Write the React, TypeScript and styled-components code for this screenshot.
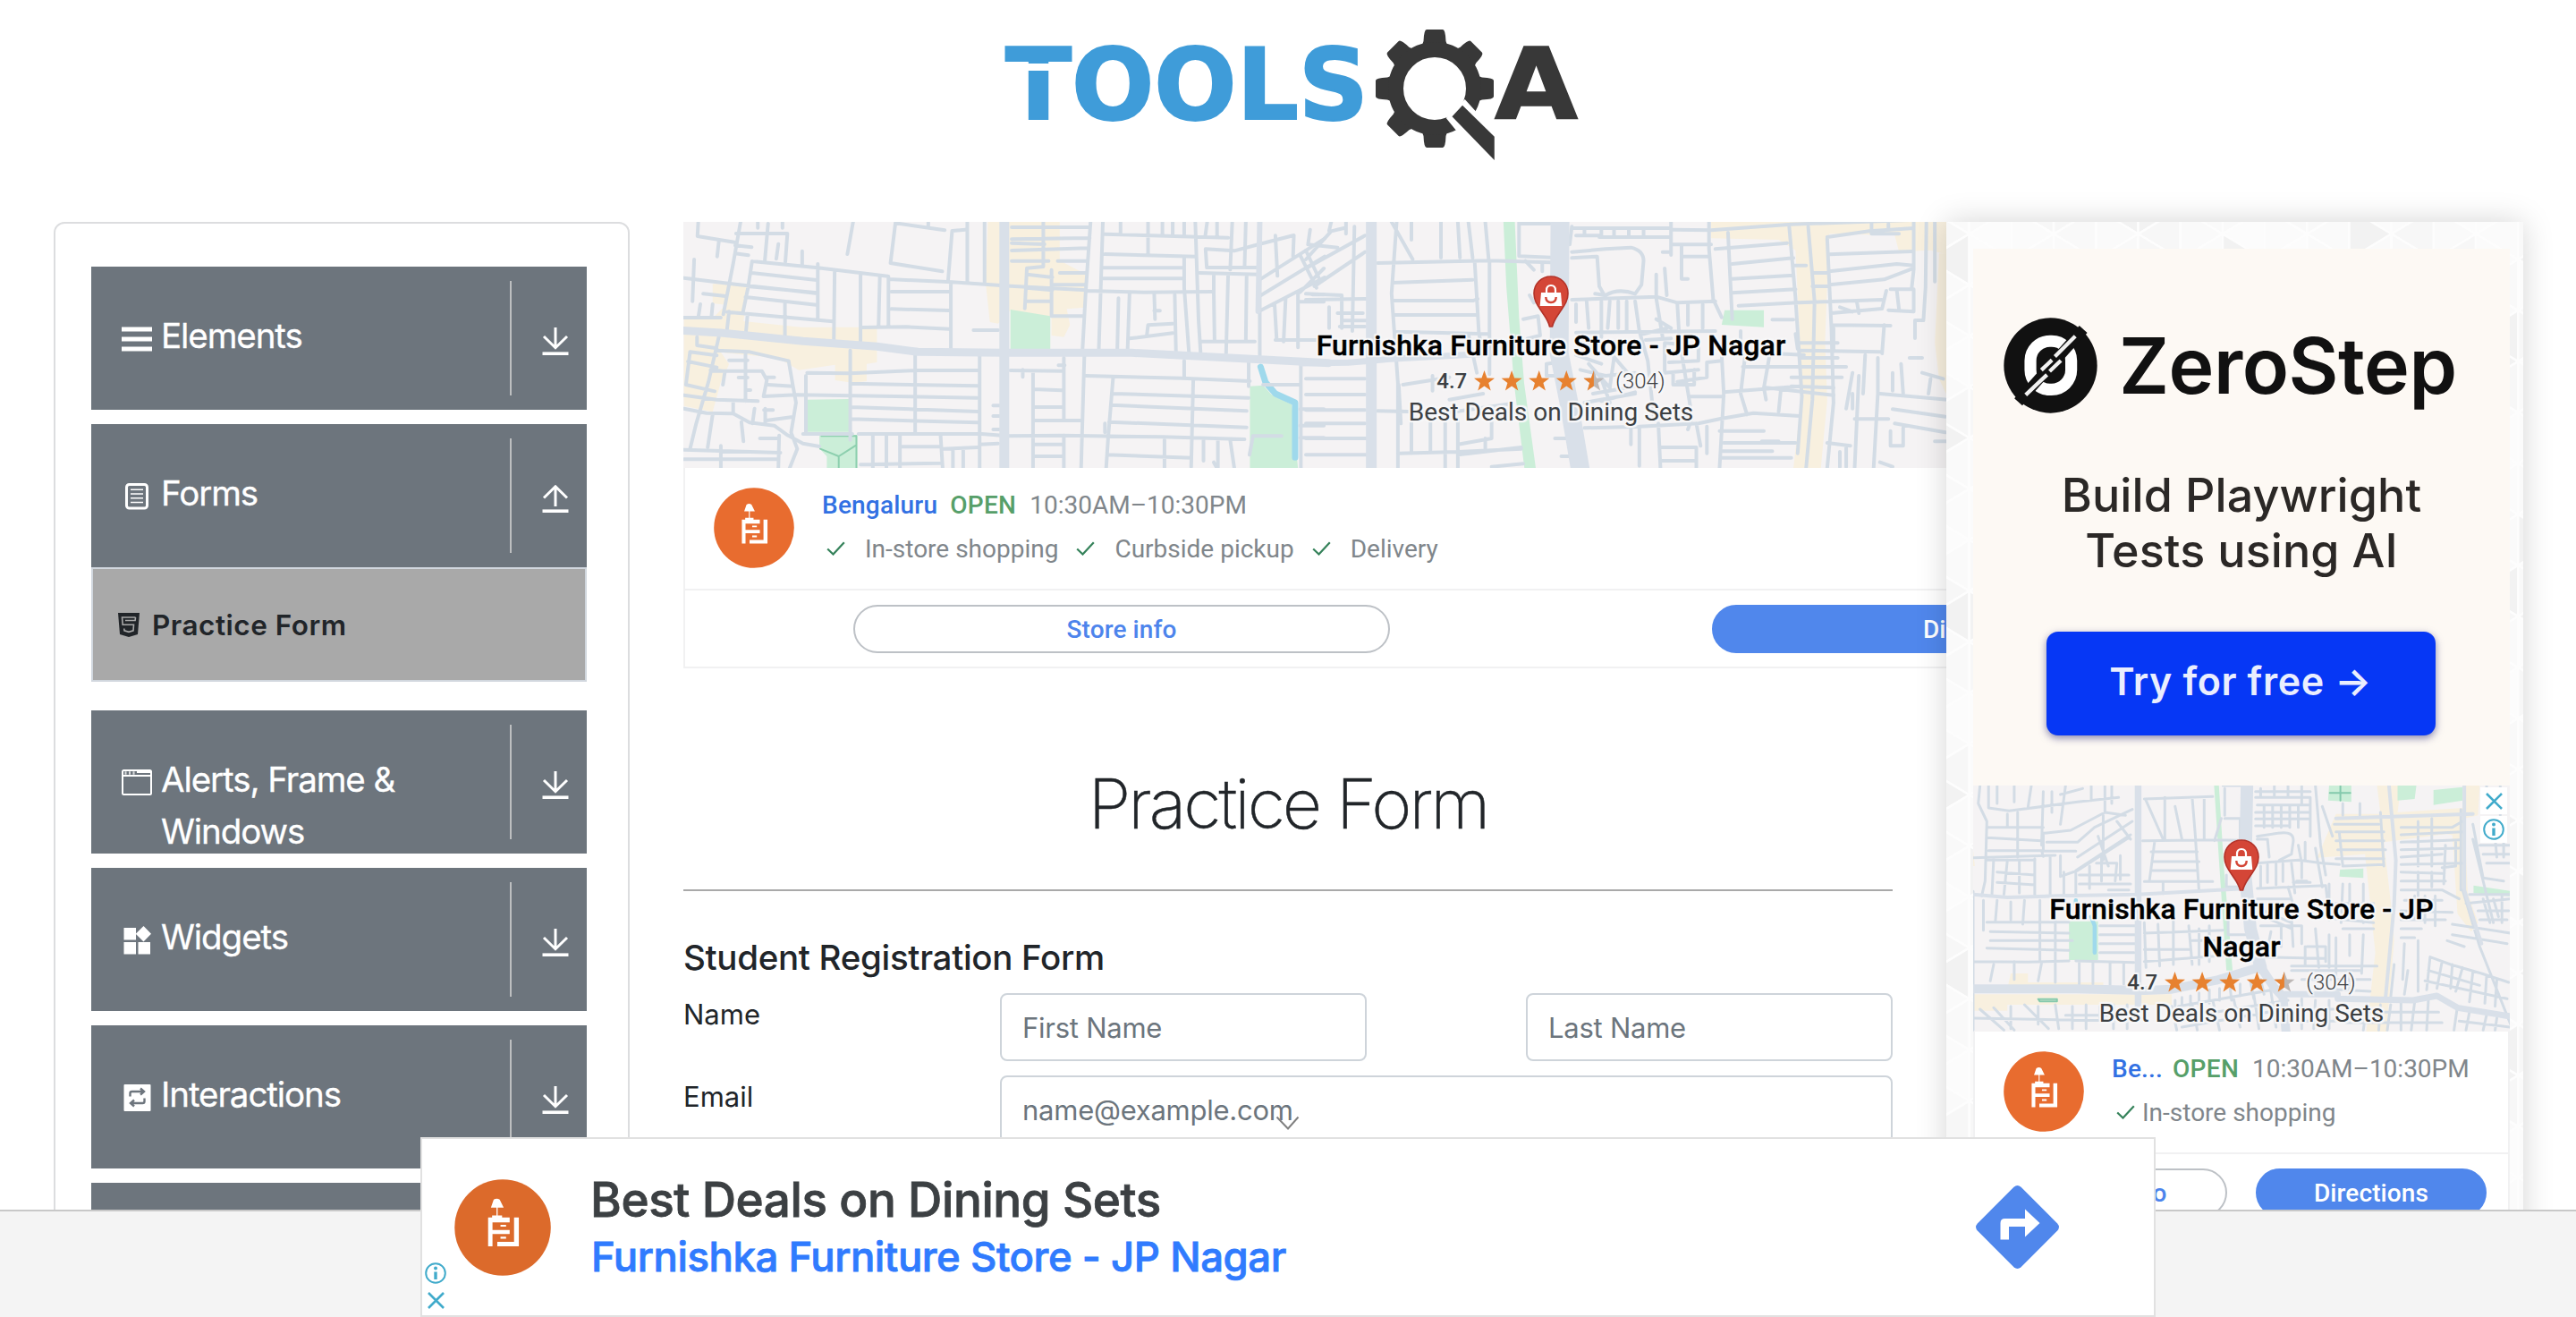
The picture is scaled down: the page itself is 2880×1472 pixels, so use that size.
import React from 'react';
import styled, { createGlobalStyle, css } from 'styled-components';

const GlobalStyle = createGlobalStyle`
  * { box-sizing: border-box; }
  html, body { margin: 0; padding: 0; background: #fff; }
  body { font-family: Inter, 'Liberation Sans', sans-serif; color: #212529; overflow: hidden; }
`;

/* ---------- page frame ---------- */

const Page = styled.div`
  position: relative;
  display: flex;
  flex-direction: column;
  width: 2880px;
  height: 1472px;
  overflow: hidden;
  background: #fff;
`;

const Header = styled.header`
  flex: none;
  display: flex;
  justify-content: center;
  height: 248px;
  padding: 30px 0 0 8px;
`;

const Columns = styled.div`
  flex: none;
  display: flex;
  align-items: flex-start;
  gap: 60px;
  height: 1104px;
  padding-left: 60px;
  clip-path: inset(-60px 0 0 0);
`;

const Footer = styled.footer`
  flex: 1;
  border-top: 2px solid #c8c8c8;
  background: #f4f4f4;
`;

/* ---------- left menu ---------- */

const Sidebar = styled.nav`
  flex: none;
  display: flex;
  flex-direction: column;
  width: 644px;
  height: 1400px;
  padding: 48px 46px 0 40px;
  border: 2px solid #dcdddf;
  border-radius: 12px;
`;

const Group = styled.div<{ $open?: boolean }>`
  display: flex;
  flex-direction: column;
  width: 554px;
  margin-bottom: ${p => (p.$open ? 32 : 16)}px;
`;

const GroupHead = styled.div`
  display: flex;
  align-items: flex-start;
  height: 160px;
  padding-left: 34px;
  overflow: hidden;
  background: #6d757d;
  color: #fff;
`;

const GroupIcon = styled.svg`
  flex: none;
  width: 34px;
  height: 34px;
  margin-top: 64px;
`;

const GroupLabel = styled.span`
  flex: 1;
  padding: 48px 29px 0 10px;
  font-size: 38.5px;
  line-height: 58px;
  letter-spacing: -1.08px;
  -webkit-text-stroke: 0.3px #fff;
`;

const GroupToggle = styled.span`
  display: flex;
  align-items: center;
  justify-content: flex-end;
  width: 86px;
  height: 128px;
  margin-top: 16px;
  padding: 7px 20px 0 0;
  border-left: 2px solid #bdbfc0;
`;

const SubItem = styled.div`
  display: flex;
  align-items: center;
  gap: 14px;
  height: 128px;
  padding: 0 0 0 28px;
  border: 2px solid #d1d7de;
  background: #a9a9a9;
  font-size: 31.5px;
  font-weight: 600;
  letter-spacing: 0.5px;
`;

/* ---------- centre column ---------- */

const Main = styled.main`
  flex: none;
  display: flex;
  flex-direction: column;
  width: 1352px;
`;

const Title = styled.h1`
  margin: 102px 0 0;
  padding-bottom: 48px;
  border-bottom: 2px solid #a9a9a9;
  font-size: 77px;
  font-weight: 200;
  line-height: 96px;
  letter-spacing: -2.9px;
  text-align: center;
  -webkit-text-stroke: 0.5px #212529;
`;

const FormHeading = styled.h5`
  margin: 50px 0 16px;
  font-size: 38.5px;
  font-weight: 500;
  line-height: 48px;
  letter-spacing: -0.31px;
`;

const FormRow = styled.div<{ $wide?: boolean }>`
  display: grid;
  grid-template-columns: ${p => (p.$wide ? '354px 998px' : '354px 410px 178px 410px')};
  height: 76px;
  margin-bottom: 16px;
`;

const Label = styled.label`
  font-size: 31px;
  line-height: 48px;
`;

const Input = styled.input<{ $col?: number }>`
  grid-column: ${p => p.$col ?? 2};
  width: 100%;
  height: 76px;
  padding: 0 23px;
  border: 2px solid #ced4da;
  border-radius: 8px;
  outline: none;
  background: #fff;
  font: 400 31px Inter, sans-serif;
  letter-spacing: -0.25px;
  &::placeholder { color: #6c757d; opacity: 1; }
`;

/* ---------- store ad ---------- */

const StoreAd = styled.section<{ $width: number }>`
  position: relative;
  display: flex;
  flex-direction: column;
  width: ${p => p.$width}px;
  height: 500px;
  font-family: Roboto, 'Liberation Sans', sans-serif;
  background: #fff;
`;

const MapArea = styled.div`
  position: relative;
  display: flex;
  flex-direction: column;
  align-items: center;
  height: 275px;
  padding-top: 60px;
  overflow: hidden;
  background: #f5f3f4;
  > * { position: relative; }
`;

const MapSvg = styled.svg`
  && { position: absolute; }
  inset: 0;
  width: 100%;
  height: 275px;
  fill: none;
  stroke-linecap: round;
  stroke-linejoin: round;
  path { vector-effect: non-scaling-stroke; }
`;

const halo = css`
  text-shadow: 2px 0 1px #f7f7f8, -2px 0 1px #f7f7f8, 0 2px 1px #f7f7f8, 0 -2px 1px #f7f7f8,
    2px 2px 1px #f7f7f8, -2px -2px 1px #f7f7f8, 2px -2px 1px #f7f7f8, -2px 2px 1px #f7f7f8;
`;

const StoreName = styled.div<{ $width?: number }>`
  ${halo}
  width: ${p => (p.$width ? `${p.$width}px` : 'auto')};
  margin-top: -1px;
  color: #000;
  font-size: 32px;
  font-weight: 500;
  line-height: 42px;
  letter-spacing: 0.1px;
  text-align: center;
  -webkit-text-stroke: 0.4px #000;
`;

const Rating = styled.div`
  ${halo}
  display: flex;
  align-items: center;
  height: 37px;
  color: #3c4043;
  font-size: 24px;
  font-weight: 500;
`;

const Stars = styled.svg`
  width: 147px;
  height: 24px;
  margin: 0 11px 0 8px;
`;

const Reviews = styled.span`
  font-weight: 300;
`;

const Deal = styled.div`
  ${halo}
  color: #3c4043;
  font-size: 28px;
  line-height: 34px;
`;

const Info = styled.div`
  display: flex;
  height: 136px;
  padding: 22px 0 0 32px;
  border: solid #f1f1f2;
  border-width: 0 2px;
`;

const StoreLogo = styled.svg<{ $size: number }>`
  flex: none;
  width: ${p => p.$size}px;
  height: ${p => p.$size}px;
`;

const Facts = styled.div`
  display: flex;
  flex-direction: column;
  margin: -5.5px 0 0 31px;
  color: #80868b;
  font-size: 28px;
  line-height: 49px;
  white-space: nowrap;
`;

const FactRow = styled.div<{ $gap: number }>`
  display: flex;
  gap: ${p => p.$gap}px;
  height: 49px;
`;

const City = styled.span<{ $short?: boolean }>`
  margin-right: ${p => (p.$short ? -4 : -1)}px;
  color: #3271e3;
  font-weight: 500;
  letter-spacing: 0.2px;
`;

const Open = styled.span`
  color: #579f69;
  font-weight: 500;
  letter-spacing: 0.3px;
`;

const Service = styled.span<{ $gap: number }>`
  display: flex;
  align-items: center;
  gap: ${p => p.$gap}px;
  padding-left: 5px;
`;

const Actions = styled.div<{ $pad: number; $gap: number }>`
  display: grid;
  grid-template-columns: 1fr 1fr;
  gap: ${p => p.$gap}px;
  height: 89px;
  margin-top: -1px;
  padding: 16px ${p => p.$pad - 2}px 0;
  border: 2px solid #f1f1f2;
`;

const PillButton = styled.button<{ $solid?: boolean }>`
  height: 54px;
  padding: 0;
  border: 2px solid ${p => (p.$solid ? '#5087ec' : '#bdc1c6')};
  border-radius: 27px;
  background: ${p => (p.$solid ? '#5087ec' : '#fff')};
  color: ${p => (p.$solid ? '#fff' : '#4d84ec')};
  font: 500 28px Roboto, sans-serif;
  letter-spacing: 0.1px;
`;

const AdBadge = styled.div`
  position: absolute;
  top: 2px;
  right: 3px;
  display: flex;
  flex-direction: column;
  gap: 2px;
`;

const AdBadgeCell = styled.span`
  display: flex;
  align-items: center;
  justify-content: center;
  width: 30px;
  height: 30px;
  background: #fff;
`;

/* ---------- right column ---------- */

const Aside = styled.aside`
  position: relative;
  z-index: 1;
  flex: none;
  width: 645px;
  height: 1400px;
  padding: 30px 15px 0 30px;
  background: #fafafa;
  box-shadow: 0 0 32px rgba(0, 0, 0, 0.17);
`;

const Pattern = styled.svg`
  position: absolute;
  inset: 0;
  width: 645px;
  height: 1400px;
`;

const Promo = styled.section`
  position: relative;
  display: flex;
  flex-direction: column;
  align-items: center;
  width: 600px;
  height: 600px;
  padding-top: 77px;
  background: #fdf9f4;
`;

const PromoBrand = styled.div`
  display: flex;
  align-items: center;
  align-self: flex-start;
  gap: 24px;
  height: 107px;
  padding-left: 34px;
  color: #111;
  font-size: 86px;
  font-weight: 600;
  letter-spacing: -0.5px;
`;

const PromoText = styled.div`
  width: 440px;
  margin-top: 61px;
  color: #2b2826;
  font-size: 52px;
  font-weight: 500;
  line-height: 62px;
  letter-spacing: 0.1px;
  text-align: center;
  white-space: nowrap;
`;

const PromoButton = styled.button`
  width: 435px;
  height: 116px;
  margin: 59px 2px 0 0;
  padding: 0 0 7px;
  border: 0;
  border-radius: 13px;
  background: #0637f5;
  box-shadow: 0 3px 8px rgba(40, 40, 120, 0.55);
  color: #eaeefe;
  font: 600 43px Inter, sans-serif;
  letter-spacing: 0.6px;
`;

/* ---------- bottom anchor ad ---------- */

const AnchorAd = styled.section`
  position: absolute;
  z-index: 2;
  left: 470px;
  top: 1271px;
  display: flex;
  align-items: center;
  width: 1940px;
  height: 201px;
  padding: 0 106px 0 36px;
  border: 2px solid #e1e1e1;
  background: #fff;
`;

const AnchorCopy = styled.div`
  flex: 1;
  display: flex;
  flex-direction: column;
  margin: 0 0 0 44px;
`;

const AnchorTitle = styled.div`
  color: #3c4043;
  font-size: 53px;
  font-weight: 500;
  line-height: 64px;
  letter-spacing: -0.4px;
  -webkit-text-stroke: 0.8px #3c4043;
`;

const AnchorStore = styled.div`
  margin: 2px 0 0 1px;
  color: #307bfe;
  font-size: 45.5px;
  font-weight: 500;
  line-height: 60px;
  letter-spacing: -0.45px;
  -webkit-text-stroke: 0.8px #307bfe;
`;

const AnchorBadge = styled.div`
  position: absolute;
  left: 3px;
  bottom: 7px;
  display: flex;
  flex-direction: column;
  align-items: center;
  gap: 9px;
`;

const Caret = styled.svg`
  position: absolute;
  left: 1426px;
  top: 1247px;
  width: 27px;
  height: 16px;
`;

/* ---------- drawings ---------- */

const gearTooth = 'M-15 -46 L-12.5 -53 Q-12 -66 -9 -66 L9 -66 Q12 -66 12.5 -53 L15 -46 Z';

const Logo = () => (
  <svg width="642" height="154" viewBox="0 0 642 154">
    <text x="1" y="103" fontFamily="DejaVu Sans" fontWeight="700" fontSize="110" fill="#3f9cd9" stroke="#3f9cd9" strokeWidth="2" textLength="406" lengthAdjust="spacingAndGlyphs">TOOLS</text>
    <rect x="14" y="41" width="54" height="8" fill="#fff" />
    <g transform="translate(481 69)" fill="#383838">
      {[0, 45, 90, 135, 180, 225, 270, 315].map(a => (
        <path key={a} d={gearTooth} transform={`rotate(${a})`} />
      ))}
      <circle r="43.5" fill="none" stroke="#383838" strokeWidth="17" />
    </g>
    <g transform="scale(.44643 .33333) translate(-52 -60)">
      <path d="M1205 303 L1238 352 L1275 352 L1300 440 L1279 512 L1210 450 L1184 409 L1158 366 Z" fill="#fff" />
      <path d="M1199 323 L1279 428 V507 L1173 361 Z" fill="#383838" />
    </g>
    <text x="548" y="103" fontFamily="DejaVu Sans" fontWeight="700" fontSize="110" fill="#383838" stroke="#383838" strokeWidth="1.500" textLength="93" lengthAdjust="spacingAndGlyphs">A</text>
  </svg>
);

const Arrow = ({ up }: { up?: boolean }) => (
  <svg width="30" height="32" viewBox="0 0 30 32" fill="none" stroke="#fff" strokeWidth="3">
    {up ? <path d="M15 24 V2 M2 14.500 L15 1.800 L28 14.500" /> : <path d="M15 0 V23 M2 10 L15 22.700 L28 10" />}
    <path d="M0.500 29.200 H29.500" strokeWidth="3.600" />
  </svg>
);

const icons: Record<string, React.ReactNode> = {
  elements: <path d="M0 3.500h34v5H0zM0 14.500h34v5H0zM0 25.500h34v5H0z" fill="#fff" />,
  forms: (
    <g fill="none" stroke="#fff">
      <rect x="5.500" y="3.500" width="23" height="26.500" rx="3" strokeWidth="3" />
      <path d="M10 9.300h14M10 14h14M10 18.700h14M10 23.500h14" strokeWidth="1.500" />
    </g>
  ),
  alerts: (
    <g fill="none" stroke="#fff" strokeWidth="2">
      <rect x="1" y="3" width="32" height="27" rx="1.500" />
      <path d="M1 9h32" />
      <path d="M3.500 6h2M8 6h2M12.500 6h2" strokeWidth="3.500" opacity=".75" />
      <path d="M17 4.500h15" strokeWidth="3" />
    </g>
  ),
  widgets: <path d="M2.500 3h13.500v13.500H2.500zM2.500 19h13.500V32.500H2.500zM18.500 19H32V32.500H18.500zM24.500 1l8.500 8.800-8.500 8.800-8.800-8.800z" fill="#fff" />,
  interactions: (
    <g>
      <rect x="2.500" y="2" width="30" height="30" rx="1" fill="#fff" />
      <path d="M9.500 15.500v-3.500q0-2 2-2h12M21 6.500l4 3.500-4 3.500M25.500 17.500v3.500q0 2-2 2h-12M14 19.500l-4 3.500 4 3.500" fill="none" stroke="#6d757d" strokeWidth="2.400" />
    </g>
  ),
};

const Html5 = () => (
  <svg width="24" height="27" viewBox="0 0 24 27">
    <path d="M0 0H24L22 24 12 27 2 24Z" fill="#212529" />
    <path d="M19.500 5H4.500L5.200 13.200H17.500L17 19.800 12 21.300 7 19.800 6.800 17.500M19.500 5L19.100 8.500H8" fill="none" stroke="#a9a9a9" strokeWidth="1.600" />
  </svg>
);

const FurnitureLogo = ({ size, tone }: { size: number; tone: string }) => (
  <StoreLogo $size={size} viewBox="1049 1220 241 242">
    <circle cx="1169.500" cy="1341" r="120.500" fill={tone} />
    <path d="M1140 1291l7-20q8-5 15 0l10 20zM1154 1291h3v20h-3zM1143 1311h25v6h-25zM1133 1316h54v12h-43v19h43v10h-43v31h-11zM1164 1334h14v5h-14zM1164 1364h14v5h-14zM1198 1316h12v72h-54v-11h42z" fill="#fff" />
  </StoreLogo>
);

const Pin = () => (
  <svg width="40" height="58" viewBox="0 0 40 58">
    <path d="M20 1C9 1 1 9.500 1 20c0 9 5 14.500 9.500 21.500 4 6 6.500 9 8 15.500h3c1.500-6.500 4-9.500 8-15.500C34 34.500 39 29 39 20 39 9.500 31 1 20 1Z" fill="#d44637" stroke="#b23228" strokeWidth="1.600" />
    <path d="M15 20v-3.500q0-5.500 5-5.500t5 5.500V20" fill="none" stroke="#fff" strokeWidth="2.200" />
    <path d="M9 19h22l1.300 15H7.700z" fill="#fff" />
    <path d="M14.300 24q0 6 5.700 6t5.700-6" fill="none" stroke="#d44637" strokeWidth="2.400" />
  </svg>
);

const starPath = 'M11.500 0l3 8.500 8.500.2-6.800 5.300 2.500 8.500-7.200-5-7.200 5 2.500-8.500L0 8.700l8.500-.2z';

const StarRow = () => (
  <Stars viewBox="0 0 147 24">
    <clipPath id="half"><rect x="0" y="0" width="11.500" height="24" /></clipPath>
    {[0, 1, 2, 3].map(i => <path key={i} d={starPath} transform={`translate(${i * 30.6} 0)`} fill="#e7812f" />)}
    <g transform="translate(122.400 0)">
      <path d={starPath} fill="#bdb8b6" />
      <path d={starPath} fill="#e7812f" clipPath="url(#half)" />
    </g>
  </Stars>
);

const Check = () => (
  <svg width="21" height="16" viewBox="0 0 21 16">
    <path d="M1.200 8.500L7.500 14.500 19.800 1.200" fill="none" stroke="#35825a" strokeWidth="2.200" />
  </svg>
);

const Cross = () => (
  <svg width="19" height="19" viewBox="0 0 19 19">
    <path d="M1 1l17 17M18 1l-17 17" stroke="#41abcb" strokeWidth="2.600" />
  </svg>
);

const InfoMark = () => (
  <svg width="24" height="24" viewBox="0 0 24 24">
    <circle cx="12" cy="12" r="10.800" fill="#fff" stroke="#41abcb" strokeWidth="2" />
    <circle cx="12" cy="6.600" r="2" fill="#41abcb" />
    <path d="M12 10.500v8.500" stroke="#41abcb" strokeWidth="3.400" />
  </svg>
);

const WideMap = () => (
  <MapSvg>
    <g transform="translate(-4 -8) scale(.45924 .33333)">
      <g fill="#f8f0df">
        <path d="M80 232h85l-5 80-5 45 140 20h185v118l-25 5v58l-35 5-42-8v-52l-88 18-50-40-140-20 20 40-20 60-20 100-70-20V345l70 2 32-45-32-5z" />
        <path d="M750 24h175v130l62 45v112l-45 5 8 54-15 40-30-5v-60l-100-25-30 45-20-5-10-128z" />
      </g>
      <g fill="#cbeed8">
        <path d="M805 318l97 22v115h-97zM308 620l104-2v110H308zM340 740l92-2v112h-74v-40l-18-26zM1388 575l32-3 20 30 50 35 15 213h-117z" />
      </g>
      <path stroke="#8ccfae" strokeWidth="2" d="M345 742h85v108M342 785l45 25 43-38M387 810v40" />
      <path stroke="#9fd9ec" strokeWidth="7" d="M1414 510l12 52 24 38 48 30v184" />
      <g stroke="#d3dce5" strokeWidth="4">
        <path d="M45 24l-2 48 90 20M95 90l-4 50M148 24l-18 140-24 170M137 63h125l-5 95M215 30l-8 125M190 24v20M250 24v20M135 103l40 6M135 130l32 6M240 98l-5 50M298 122v46M35 150l-4 140M422 24l-14 108M525 28l120 24M525 28l-12 134 126 28M605 24v14M700 24v200M742 24v205M695 50l-32 4-10 170" />
        <path d="M10 212l130 22 120 18 75 12M176 156l160 22 170 28M176 156l-10 90-12 80M175 195l158 24M165 240l170 22M160 276l172 26M115 326l258 32M336 165v185M377 190l-2 235M440 200v235M487 207l-3 165M508 207v165M508 216l155 10 142 13 185 14M515 258h140M515 316l140 5M442 378l110-2 104 7M660 230v225M57 265l55 8M50 300l-5 45M80 300l-3 45M10 345h90M120 325l-5 60M165 335l-4 60M256 298v110M715 387h60" />
        <path d="M42 410v28l48 10M95 410l-25 150-30 140-15 85M90 455l80 5 95 30 10 80 8 60-12 100 15 55-20 70M25 460l-10 110 70 22M25 460l65 12M20 492l70 20M10 605l80 15 100 5M75 520l35 5-5 45M75 524h125l12 30-8 55 80-5 275 6 165 4M160 460v165M120 488h45M143 546h22M160 588h12M10 650l55 15 65 2 40 30 60 10 30 30 40 30 40 10M80 670l-12 110M150 695l5 65M182 650l-5 50M208 650v50M205 655h22M210 690l65-12M195 750h45M130 630v35M210 545h20M215 570l60 5" />
        <path d="M10 788l235 10M10 820h230M100 775v75M242 740l-2 110M415 455v300M307 540v190M310 530l105 2 155-10h155M415 566l310 8M415 645l310 15M415 685l310 12M573 465v265M730 470v380M300 735h120M435 735h300l50 5M470 738v110M503 738v110M536 738v110M440 838l195-5M540 778h95M635 742l5 108M665 785v65M690 785v65M640 785l85-5M730 770l45-3M763 640h15M763 675h15M763 720h15" />
        <path d="M808 42h190M808 82l190-4M808 120l185-8M808 155h90M808 95l80 4M885 24v150l-40 5-5 135M845 200l62 10M845 245l62 8M845 290h55M905 185v155h80M920 155h70M925 195h65M905 235h80M1000 24l-12 240-8 200M1030 24l-10 435M1035 65l300 12M1035 132l220 8M1030 178h195M1030 214h195M990 255l140 5 165-2M1140 24v108M1073 24v40M1175 24v40M1200 24v40M1228 24v40M1255 24l8 330 5 110M1284 24l-5 50M1308 24v50M1345 24l-5 160M1378 24l-3 150M1412 24v455" />
        <path d="M1280 115l3 62h125M1280 115l70 6 60-22 85-30-2 70M1265 195l145 5M1228 145v100l12 225M1300 200v65l2 160M1335 200l-5 265M1380 200l-2 225M1270 425h130M1068 280l-3 180M1095 260l-5 200M1155 265l2 85M1155 322h14M1200 365l-60 5-3 35M1095 415l105-18M1205 268l3 195M1415 215l155-135M1415 270l155-130M1415 320l155-110M1510 135l40 110M1568 180l-58 80M1450 70l5 135M1475 280l-5 145M1448 300l5 115M1505 265v180M1450 420h105M1510 292h58M1540 268h28" />
        <path d="M805 522l130 2M835 520v24M935 480v210M860 524v326M922 505h15M860 585l70 4M860 645h75M860 690h115M985 470l-8 380M988 540l235 8 165 10M1055 545l-12 200-5 105M1055 600l330 14M1050 638l330 20M1045 695l335 18M1040 805l205 10M1228 490v55M1250 555l-5 290M1385 495v80M1035 700v30M800 742l130-2 245 5 200 8M860 770h75M860 810h75M935 740v110M1180 755v95M1275 755v70M1310 755v95M1340 755l10 95M1300 830l8 20M1512 505v345M1420 570h90M1510 652h58M1510 707h58M1510 748h58M1395 742h70M1395 745l-8 60" />
      </g>
      <path stroke="#d9e0e9" strokeWidth="11" d="M790 24v830" />
      <path stroke="#d9e0e9" strokeWidth="9" d="M0 388l100 8 200 28 180 18 100 18 210 3h310l480 34" />
      <path stroke="#d9e0e9" strokeWidth="6" d="M1412 24l-4 300" />
    </g>
    <g transform="translate(696 -8) scale(.47192 .33333)">
      <g fill="#f8f0df">
        <path d="M960 24h560v110l-40-15-75 5-10-55-155-5-5 170-5 190 5 200-15 225h-65l20-250-5-180-10-300-40-35-160-5z" />
        <path d="M1500 130h20v480l-20-60-10-120z" />
      </g>
      <path fill="#cbeed8" d="M468 24h27l10 320 12 220 28 290h-27l-25-290-18-320zM992 320h93v57l-100-8z" />
      <g stroke="#d3dce5" strokeWidth="4">
        <path d="M10 50l-5 50 70 10M0 150l60-95 30-10M0 180l140-110M20 240l120-115M0 120l30 90M0 265l85 5v110M0 285l145-3M55 310v70M75 330h60M85 355h60M80 375h60M115 40l-5 350M60 24l-5 30M95 24v40M215 24l-12 240 15 300v290M203 24l50 125M250 24v60M320 24v120M360 24l5 120M385 24l10 120M425 24l8 125M170 162l265-8 145 6M400 160l10 240 10 60M435 155v380M205 228l190-10M207 288h190l10-6M207 336h200M210 392l225 8" />
        <path d="M505 24v115l75 4M510 30h68M520 155l20 30M515 350l35-10 5 65-30 10M560 165v25M0 550h140M0 603h140M0 655h140M0 700h140M0 750h145M0 805h145M170 658l170 5 150-30M230 570l110-25M250 690v110M295 680v110M330 670v180M360 690v160M220 800l140-5 150-10M360 770l80-20v-60M425 750v40M360 805l150-25M440 845l75-10M350 400v60M385 400l20 130M220 570l5 130M300 540v50M340 620l80-20" />
        <path d="M630 40l-5 60M635 45h230v90M640 70h55v5h165M660 45v20M700 45v28M730 45v28M765 45v28M800 45v28M630 125l80-10 60-5q30 10 30 45l-5 80-15 30q-40-20-70 5l-25-5M630 145l60-5 5 100 10 25M630 285l200-10 50 20 90-5M870 50l90 2 190-20 300-15M870 100h90M890 105v110h15M895 140h60M845 125h20M865 24v60M955 24v90l10 170 20 60M1000 60l10 290M850 180l5 90M830 200v75" />
        <path d="M970 115l170-20M1010 165l145-20M1010 215l145-12M1010 262l150-12M1025 305l140-10 200-10M1145 40l15 240 15 330-10 190M1190 40l15 250-5 330-15 230M1235 75l100-20 105-10M1240 133l195-10M1240 190l160-25 40 5M1240 235l130-18 65-35M1155 170h30M1200 195h35M1200 240h35M1235 80l10 300 5 250-15 220M1245 330l120-15M1245 370l140 2M1440 24v160l-5 65M1340 24v40h65M1470 24l-2 220-5 110h-20v60M1385 250h55v75l-60-5M1375 255l-10 60M1400 255l5 60M1305 290l5 40M1265 310l30 15" />
        <path d="M640 300v60M665 290l5 90M700 290v120M720 290l-5 90M740 290v90M760 290v100M780 290l10 100 20 100 15 200M830 280l15 130M880 300l5 120 30 260-10 40M905 300v70M940 300v80M640 395l330-5M800 400l55-20M805 420l60-5M830 350l35 30M850 430l80 10v50l-70 5M850 430v100l80-10M870 530v40h50v-50M880 560l70-15v-50l35-5M720 460l60 100M650 520l60 20 70-10M670 500l50 80M640 470l60 30M680 600l100-25M700 625l80-30M700 550l20 80M660 630l120-30M730 480l-10 100M570 500v40h50M570 500l50-10" />
        <path d="M985 470l5 130-10 250M1040 480l-10 120 15 70M1035 510h245M1030 390v70l150 10M1100 460l-15 120 5 40M990 595l180-20M1090 580l160 25M910 610h80M1150 545h120M1150 575l100 5M1170 430h90M1170 455l190 5M1170 480h90M1250 380v80M1370 370l-5 95M1125 590l-5 70M660 715l130-5 140-10 50-15 80-20 110 10M770 710v60M790 712v130M835 700l5 150M925 700l10 75M950 710v90M840 780h85v70M840 825h85M980 725h105M990 765h170M985 793h120M985 815h165M1080 760h40M1235 765l55 10M1280 780v65M1265 795v50M1295 600v50M1295 530l-15 120M1310 540l-10 310M1325 470l-5 130M1355 480v120l-10 250M1300 685h80M1360 600l160 20M1390 652l125 25M1395 700l120 30M1385 725v50h30v-60M1490 760h28M1360 830l30 15M1390 530v60M1410 500l5 100M1430 480h30M1460 530l50 20M1480 550l-5 50M1105 352h50M1160 400l5 50" />
        <path d="M590 750h30M605 810h20M530 270l10 25M1490 24v200M1380 30v20M600 550l30 5" />
      </g>
      <path stroke="#d9e0e9" strokeWidth="12" d="M155 24v830" />
      <path stroke="#d9e0e9" strokeWidth="7" d="M-10 498l110-2 100-12 250-20" />
      <path stroke="#d9e0e9" strokeWidth="21" d="M602 24l-2 440 25 180 25 210" />
    </g>
  </MapSvg>
);

const NarrowMap = () => (
  <MapSvg>
    <g transform="scale(.38266 .33333)">
      <g fill="#f8f0df">
        <path d="M1060 95h130l-10-95h70l-10 90 190-15V0h50l-5 100-40 10 10 250 30 100-20 30-40-60-15-270-200 30 20 200 10 130-25 340h-60l30-300-30-330-140 12z" />
        <path d="M0 700h580v35H100v20H0zM110 630h50v30h220v20H100zM0 220l5 50H0zM1370 110h50v60l-50-10z" />
      </g>
      <path fill="#cbeed8" d="M704 0h14l15 280 25 340h-18l-20-340zM280 455h85v130h-85zM1040 0h65v55l-68-5zM1240 0h55l-5 45-50 5zM1345 15l85-10v45l-85 15zM1072 282l68-4v32l-70-5zM1462 335l106 18v18l-106-10z" />
      <path stroke="#84c9ac" strokeWidth="2" d="M1042 25h60M1073 0v50M190 716h55v8h-50z" />
      <path stroke="#9fd9ec" strokeWidth="4.500" d="M345 440l10 30v90M300 385v20" />
      <g stroke="#d3dce5" strokeWidth="3">
        <path d="M20 0l-5 60 25 60-5 200-10 50M45 0v75l60 10 200-30 120-15M70 0v60M120 0v55M170 0l-10 75M205 20l-5 180M230 20v70M255 30l65-20M270 0l-15 130M345 0v50M385 0v90M405 0v60M130 90v150M100 95v45M40 140h165M40 175l160 10M45 218h155l5 20M40 250h140M205 160v60h95M205 160l80-10 100-60 60 10M215 190h90l50-50 110-60M255 235v70l50-20 150-110M300 285l160-120M305 240l160-120M365 170l30 100M380 100v150M420 120l40 60" />
        <path d="M0 242l240-8M60 245l-5 120M100 250l-10 115M135 250v110M180 245v120M225 240v125M70 290l110 10M70 325l110 8M265 290v75M300 295v75M310 330h150M340 270v75M360 260h60l-5 60M375 240v80M430 235v80M310 300h145M395 350h60M0 370v450M30 385v100M70 385l-5 70M110 390v60M150 385l-5 80M195 385v200M240 400v190M40 458h240M50 490l230 5M50 520h240M40 545l240 8M0 590l160 2 120-4M60 600l-10 55M120 590v60M200 595l-10 60M240 595v65M370 500h105M370 530h105M370 560h100M370 470h105M300 588l170 5M310 595v70M350 595v70M400 595v75M440 595v70" />
        <path d="M500 45l200-8M505 50l50 130M560 40v140M590 70l20 110M640 40l10 140M675 45v135M495 185l210-3 75 2M530 190l-15 130M520 222h135M525 255h135M520 285h130M650 185l10 170M500 322h200M555 322v40M735 10v90M735 110h45v70M730 0h50M725 110l-20 75M740 300v40h40M0 355v10M500 460l5 150M540 465l5 140M585 450v150M630 470l10 130M500 495l230-10M500 550h130M640 520h90M660 480v120M690 470v120M500 590l230-20M745 440v60h60" />
        <path d="M825 40h160v130M830 65h150M825 90h155M825 112h155M825 135h100M850 70v70M875 65v75M900 65v75M925 65v75M950 65v75M840 10v30M880 0v40M920 0v40M960 0v60M1000 0l15 200 15 100M1020 70l30 100M825 20h160M1055 130h130M1060 155h140M1060 185h140M1065 215h140M1060 245h140M1070 160l10 110 120-5M1190 90l10 180M1130 60v40M1080 60v40M830 170l60-10q50-10 45 30l-5 40-35 20M830 180h30l5 60M830 260l120-10 70 10 50 5M1000 210l20 130M950 200l10 60M970 190v60" />
        <path d="M840 270v70M860 265v60M885 262v70M905 262v60M930 260l10 100M960 260v50M830 345l200-10 10 100M920 340l20 80M935 325h50M945 320h30M1040 330v120M1080 330l-5 130M830 380h100M850 420l80 40M870 450l60 30M840 470h120v60M870 490l-10 60M900 470v70M930 440l5 100M970 540v60M1000 480l10 130M830 575l200 5M930 605h250M1040 500v110M975 540h55v50M1060 510v90M1100 500v70M1140 500l-5 130M930 620h200M960 650h200M1000 680l160 10M1060 600v90M1100 620v80M1040 445l130 15M1080 480h90M1060 395h110M1100 330v80M1140 330v130" />
        <path d="M1250 140h150l30-20M1250 165l180-10M1250 190l170-8M1250 215l170-5M1250 240l120-10M1250 265l180-5M1250 290l120 5M1300 120v150M1340 110v160M1380 200l-5 130M1250 320h130M1300 290v80M1340 290v50M1410 190v80l-40 5M1500 0l5 90M1540 0v100M1460 130l30 180 60 10M1480 200h88M1490 230h78M1500 260h68M1460 180l60 280M1520 110l10 130M1550 120v120M1250 350h120l50 30M1260 385h110M1250 420l150 5M1250 450h130M1290 370v80M1320 370v90M1350 370v100M1250 480h60M1250 510h40M1260 530l-5 120M1300 520v80" />
        <path d="M1425 80v270M1430 350l50 190 90 260M1440 395l128-15M1450 365h118M1475 420h90M1480 450h80M1490 380l20 80M1520 380l15 60M1545 370v90M1400 465l170 30M1400 500l160 30M1385 520l50 20M1335 575l60 25 90 30 80 30M1335 575l-10 110M1370 590l-15 90M1400 600l-5 80M1430 610l-20 80M1460 625l-10 100M1500 640l-5 90M1530 650l-5 90M1330 620l150 50M1320 655l240 60M1230 600l-10 110M1270 620l-10 80M1300 580v110M1150 735l-10 85M1190 735l-5 85M1220 735l-10 85M1250 730v90M1290 725l-10 95M1330 720l-5 100M1100 760h260M1090 795h280M1415 740l-10 80M1450 760l-10 60M1500 770l-10 50M1530 780l-5 40M1420 790l150 20" />
        <path d="M600 740l300-60M590 720v30M610 710v30M635 705v35M660 695v40M690 685v45M720 680v40M750 670l5 50M780 665v40M810 655l10 60M840 650l10 50M580 740l15 80M640 735l15 85M700 720l20 100M760 710l20 100M820 700l15 115M870 690l15 120M600 780l320-60M610 810l300-60M960 715v100M1000 720l-5 95M1040 720v95M940 750h120M935 790h130M0 780l480 10M20 750l70 70M60 745l60 75M110 740v75M150 735l70 80M190 740v60M240 735l10 80M290 740v75M330 735v80M370 740v40M410 735v80M450 735v80M270 770h200" />
      </g>
      <g stroke="#d9e0e9">
        <path strokeWidth="7.500" d="M482 0v740" />
        <path strokeWidth="4" d="M0 365l100 10 150-5 230-5 320-20M1060 110l400-15M1215 0l20 250-5 150-25 310M1435 0v350l50 180" />
        <path strokeWidth="14" d="M800 0l-5 300 15 180 30 130" />
        <path strokeWidth="10" d="M0 682h300l200 5 80-4 130-30 130-45 40 70 25 30 10 130" />
        <path strokeWidth="7" d="M905 700h160v15l220 5 70-15 60 40 160 30" />
      </g>
    </g>
  </MapSvg>
);

const ZeroStepMark = () => (
  <svg width="105" height="107" viewBox="190 343 318 323">
    <ellipse cx="349" cy="504.500" rx="158" ry="161" fill="#111" />
    <rect x="281" y="422" width="138" height="164" rx="66" fill="none" stroke="#fff" strokeWidth="40" />
    <path d="M240 628L460 382" stroke="#111" strokeWidth="36" />
    <path d="M265 604L337 536M318 520L354 486M346 524L384 488M364 474L433 405" stroke="#f2f2f2" strokeWidth="13" />
  </svg>
);

const DirectionsMark = () => (
  <svg width="93" height="93" viewBox="0 0 93 93">
    <path d="M42.500 1.800q4-3.500 8 0l40.700 40.700q3.500 4 0 8L50.500 91.200q-4 3.500-8 0L1.800 50.500q-3.500-4 0-8z" fill="#5087ec" />
    <path d="M27.500 60.500V42q0-5 5-5h22.500V26.500l16.500 15.500-16.500 15.500V46H37v14.500z" fill="#fff" />
  </svg>
);

const shades = ['#fbfbfb', '#fafafa', '#f7f7f7', '#fcfcfc', '#f9f9f9', '#f2f2f2', '#fafafa'];
const triangles = Array.from({ length: 15 }, (_, c) =>
  Array.from({ length: 52 }, (_, r) => {
    const x = 25.7 - 47.2 + c * 47.2;
    const y = -72 + r * 28.5;
    const left = (c + r) % 2 === 0;
    const d = left ? `M${x} ${y}L${x + 47.2} ${y - 28.5}V${y + 28.5}Z` : `M${x + 47.2} ${y}L${x} ${y - 28.5}V${y + 28.5}Z`;
    return { d, fill: shades[(c * 5 + r * 3 + ((c * r) % 4)) % 7] };
  })
).flat();

const TrianglePattern = () => (
  <Pattern stroke="#fdfdfd" strokeWidth="2.500">
    {triangles.map((t, i) => <path key={i} d={t.d} fill={t.fill} />)}
  </Pattern>
);

/* ---------- composed parts ---------- */

const menu = [
  { icon: 'elements', label: 'Elements' },
  { icon: 'forms', label: 'Forms', child: 'Practice Form' },
  { icon: 'alerts', label: 'Alerts, Frame & Windows' },
  { icon: 'widgets', label: 'Widgets' },
  { icon: 'interactions', label: 'Interactions' },
  { icon: '', label: '' },
];

const StoreCard = ({ compact }: { compact?: boolean }) => (
  <StoreAd $width={compact ? 600 : 1940}>
    <MapArea>
      {compact ? <NarrowMap /> : <WideMap />}
      <Pin />
      <StoreName $width={compact ? 470 : undefined}>Furnishka Furniture Store - JP Nagar</StoreName>
      <Rating>
        4.7
        <StarRow />
        <Reviews>(304)</Reviews>
      </Rating>
      <Deal>Best Deals on Dining Sets</Deal>
    </MapArea>
    <Info>
      <FurnitureLogo size={90} tone="#e86c2f" />
      <Facts>
        <FactRow $gap={15}>
          <City $short={compact}>{compact ? 'Be...' : 'Bengaluru'}</City>
          <Open>OPEN</Open>
          <span>10:30AM–10:30PM</span>
        </FactRow>
        <FactRow $gap={15}>
          {(compact ? ['In-store shopping'] : ['In-store shopping', 'Curbside pickup', 'Delivery']).map(s => (
            <Service key={s} $gap={compact ? 8 : 22}><Check />{s}</Service>
          ))}
        </FactRow>
      </Facts>
    </Info>
    <Actions $pad={compact ? 26 : 190} $gap={compact ? 32 : 360}>
      <PillButton>Store info</PillButton>
      <PillButton $solid>Directions</PillButton>
    </Actions>
    {compact && (
      <AdBadge>
        <AdBadgeCell><Cross /></AdBadgeCell>
        <AdBadgeCell><InfoMark /></AdBadgeCell>
      </AdBadge>
    )}
  </StoreAd>
);

export default function App() {
  return (
    <Page>
      <GlobalStyle />
      <Header><Logo /></Header>
      <Columns>
        <Sidebar>
          {menu.map((m, i) => (
            <Group key={i} $open={!!m.child}>
              <GroupHead>
                <GroupIcon viewBox="0 0 34 34">{icons[m.icon]}</GroupIcon>
                <GroupLabel>{m.label}</GroupLabel>
                {m.label && <GroupToggle><Arrow up={!!m.child} /></GroupToggle>}
              </GroupHead>
              {m.child && <SubItem><Html5 />{m.child}</SubItem>}
            </Group>
          ))}
        </Sidebar>
        <Main>
          <StoreCard />
          <Title>Practice Form</Title>
          <FormHeading>Student Registration Form</FormHeading>
          <FormRow>
            <Label>Name</Label>
            <Input placeholder="First Name" />
            <Input $col={4} placeholder="Last Name" />
          </FormRow>
          <FormRow $wide>
            <Label>Email</Label>
            <Input placeholder="name@example.com" />
          </FormRow>
        </Main>
        <Aside>
          <TrianglePattern />
          <Promo>
            <PromoBrand><ZeroStepMark />ZeroStep</PromoBrand>
            <PromoText>Build Playwright<br />Tests using AI</PromoText>
            <PromoButton>Try for free →</PromoButton>
          </Promo>
          <StoreCard compact />
        </Aside>
      </Columns>
      <Footer />
      <Caret viewBox="0 0 27 16">
        <path d="M1.500 1.500L14 14.500 25.500 1.500" fill="none" stroke="#808080" strokeWidth="2" />
      </Caret>
      <AnchorAd>
        <FurnitureLogo size={108} tone="#dc6a2b" />
        <AnchorCopy>
          <AnchorTitle>Best Deals on Dining Sets</AnchorTitle>
          <AnchorStore>Furnishka Furniture Store - JP Nagar</AnchorStore>
        </AnchorCopy>
        <DirectionsMark />
        <AnchorBadge><InfoMark /><Cross /></AnchorBadge>
      </AnchorAd>
    </Page>
  );
}
